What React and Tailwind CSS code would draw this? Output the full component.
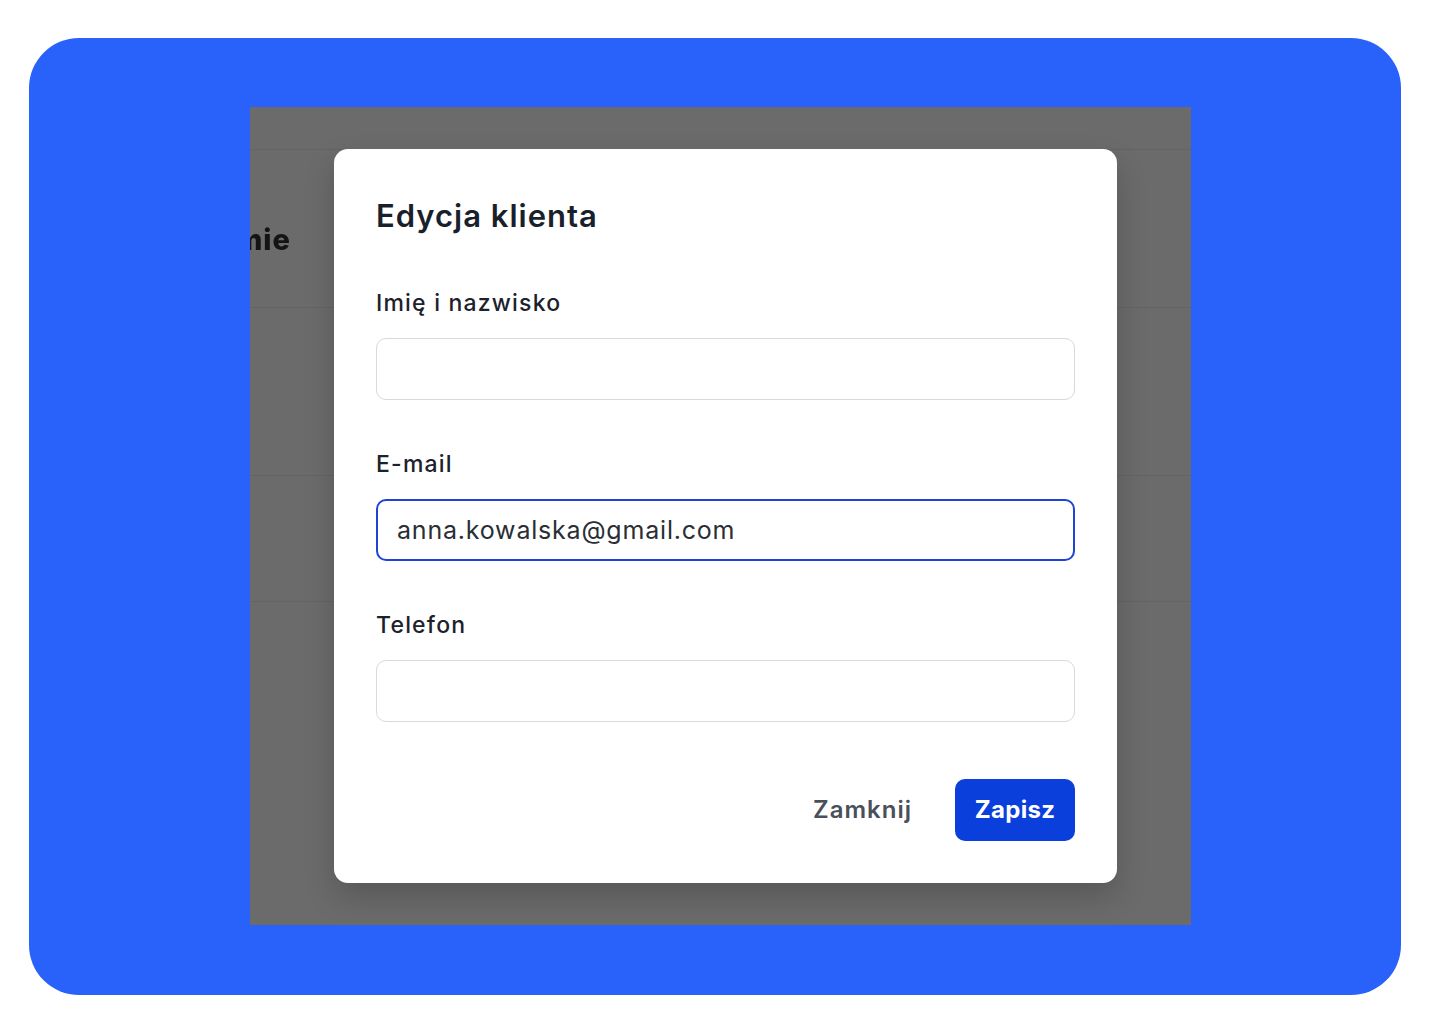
import { useState } from "react";

const fields = [
  { id: "name", label: "Imię i nazwisko", value: "" },
  { id: "email", label: "E-mail", value: "anna.kowalska@gmail.com", focused: true },
  { id: "phone", label: "Telefon", value: "" },
];

function Field({ label, value, focused }) {
  const [text, setText] = useState(value);

  return (
    <div className="flex flex-col">
      <label className="text-[23px] leading-[30px] font-medium tracking-[1.2px] text-[#1c212c]">
        {label}
      </label>
      <input
        value={text}
        onChange={(e) => setText(e.target.value)}
        className={`mt-[20px] h-[62px] w-full rounded-[10px] bg-white px-[19px] text-[25px] tracking-[0.8px] text-[#2a2e35] outline-none ${
          focused ? "border-2 border-[#1d44d6]" : "border border-[#d7d9de]"
        }`}
      />
    </div>
  );
}

export default function App() {
  return (
    <div className="min-h-[1024px] bg-white pt-[38px] pl-[29px] pr-[39px] font-['Inter','Open_Sans',sans-serif]">
      <div className="h-[957px] rounded-[50px] bg-[#2962fa] pt-[69px] pl-[221px]">
        {/* page behind the overlay */}
        <div className="relative h-[818px] w-[941px] overflow-hidden bg-[#6b6b6b]">
          <div className="flex flex-col">
            <div className="h-[43px] border-b border-[#646464]" />
            <div className="flex h-[158px] items-start border-b border-[#646464]">
              <div className="mt-[72px] flex w-[41px] justify-end">
                <span className="whitespace-nowrap text-[29px] leading-[36px] font-extrabold tracking-[1px] text-[#141414] blur-[0.6px]">
                  Imie
                </span>
              </div>
            </div>
            <div className="h-[168px] border-b border-[#646464]" />
            <div className="h-[126px] border-b border-[#646464]" />
          </div>

          {/* dialog */}
          <div className="absolute left-[84px] top-[42px] flex h-[734px] w-[783px] flex-col rounded-[14px] bg-white px-[42px] pt-[48px] shadow-[0_14px_30px_rgba(0,0,0,0.18)]">
            <h2 className="text-[31px] leading-[38px] font-semibold tracking-[1px] text-[#1a1f2c]">
              Edycja klienta
            </h2>
            <div className="mt-[53px] flex flex-col gap-[49px]">
              {fields.map((f) => (
                <Field key={f.id} {...f} />
              ))}
            </div>
            <div className="mt-[57px] flex items-center justify-end gap-[43px]">
              <button className="text-[24px] font-semibold tracking-[1px] text-[#4a4f59]">
                Zamknij
              </button>
              <button className="h-[62px] w-[120px] rounded-[10px] bg-[#0a3fdc] text-[24px] font-bold tracking-[0.3px] text-white">
                Zapisz
              </button>
            </div>
          </div>
        </div>
      </div>
    </div>
  );
}
